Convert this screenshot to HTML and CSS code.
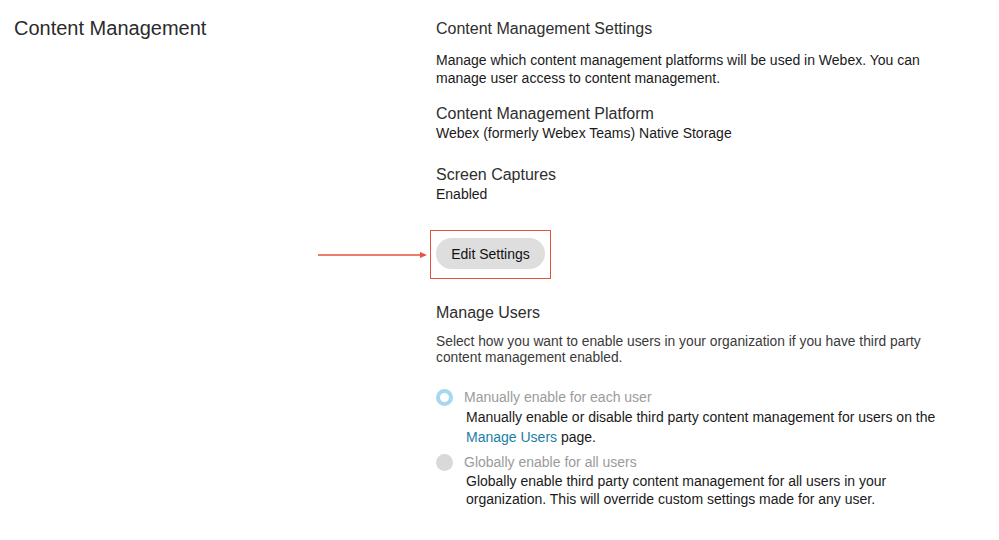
FILE: index.html
```html
<!DOCTYPE html>
<html lang="en">
<head>
<meta charset="utf-8">
<title>Content Management</title>
<link rel="stylesheet" href="styles.css">
</head>
<body>
<div class="page">
  <div class="left">
    <h1 class="page-title">Content Management</h1>
    <div class="arrow-row">
      <svg class="arrow" width="110" height="8" viewBox="0 0 110 8"><line x1="0" y1="4" x2="103" y2="4" stroke="#e8513a" stroke-width="1.3"/><polygon points="102,1 109,4 102,7" fill="#e8513a"/></svg>
    </div>
  </div>
  <div class="right">
    <h2 class="heading">Content Management Settings</h2>
    <p class="para">Manage which content management platforms will be used in Webex. You can manage user access to content management.</p>
    <div class="field">
      <div class="field-label">Content Management Platform</div>
      <div class="field-value">Webex (formerly Webex Teams) Native Storage</div>
    </div>
    <div class="field field-2">
      <div class="field-label">Screen Captures</div>
      <div class="field-value">Enabled</div>
    </div>
    <div class="highlight">
      <button class="btn">Edit Settings</button>
    </div>
    <h2 class="heading heading-users">Manage Users</h2>
    <p class="para para-small">Select how you want to enable users in your organization if you have third party content management enabled.</p>
    <div class="option">
      <div class="option-row">
        <span class="radio radio-on"></span>
        <span class="option-label">Manually enable for each user</span>
      </div>
      <div class="option-desc">Manually enable or disable third party content management for users on the <a class="link" href="#">Manage Users</a> page.</div>
    </div>
    <div class="option option-2">
      <div class="option-row">
        <span class="radio radio-off"></span>
        <span class="option-label">Globally enable for all users</span>
      </div>
      <div class="option-desc option-desc-2">Globally enable third party content management for all users in your organization. This will override custom settings made for any user.</div>
    </div>
  </div>
</div>
</body>
</html>
```

FILE: styles.css
```css
* { box-sizing: border-box; }
html, body {
  margin: 0;
  padding: 0;
  background: #ffffff;
  font-family: "Liberation Sans", Arial, Helvetica, sans-serif;
  color: #1f1f1f;
}
.page {
  display: flex;
  width: 999px;
  height: 540px;
}
.left {
  width: 436px;
  flex: none;
  padding-left: 14px;
  padding-top: 16px;
}
.page-title {
  margin: 0;
  font-size: 20px;
  line-height: 24px;
  font-weight: normal;
  color: #2b2b2b;
}
.arrow-row {
  margin-top: 211px;
  padding-left: 304px;
  height: 8px;
}
.arrow { display: block; }
.right {
  flex: 1;
  padding-top: 19px;
}
.heading {
  margin: 0;
  font-size: 16px;
  line-height: 20px;
  font-weight: normal;
  color: #2e2e2e;
}
.para {
  margin: 12px 0 0;
  width: 500px;
  font-size: 14px;
  line-height: 18px;
  color: #1a1a1a;
}
.field { margin-top: 17px; }
.field-2 { margin-top: 23px; }
.field-label {
  font-size: 16px;
  line-height: 20px;
  color: #2e2e2e;
}
.field-value {
  font-size: 14px;
  line-height: 18px;
  color: #1a1a1a;
}
.highlight {
  margin-top: 27px;
  margin-left: -6px;
  width: 121px;
  height: 49px;
  border: 1px solid #e8513a;
  padding: 7px 0 0 5px;
}
.btn {
  display: block;
  width: 109px;
  height: 31px;
  border: none;
  border-radius: 16px;
  background: #dedede;
  font-family: inherit;
  font-size: 14px;
  color: #111;
  padding: 0;
  cursor: pointer;
}
.heading-users { margin-top: 24px; }
.para-small {
  margin-top: 11px;
  font-size: 13.8px;
  line-height: 16px;
  color: #3a3a3a;
  width: 492px;
}
.option { margin-top: 22px; }
.option-2 { margin-top: 6px; }
.option-row {
  display: flex;
  align-items: center;
  height: 18px;
}
.radio {
  width: 17px;
  height: 17px;
  border-radius: 50%;
  flex: none;
}
.radio-on {
  border: 4px solid #a8d8f0;
  background: #fff;
}
.radio-off {
  background: #d9d9d9;
}
.option-label {
  margin-left: 11px;
  font-size: 14px;
  color: #9b9b9b;
}
.option-desc {
  margin-left: 30px;
  margin-top: 1px;
  width: 490px;
  font-size: 14px;
  line-height: 20px;
  color: #1a1a1a;
}
.option-desc-2 { line-height: 18px; }
.link {
  color: #1a7ea8;
  text-decoration: none;
}
```
